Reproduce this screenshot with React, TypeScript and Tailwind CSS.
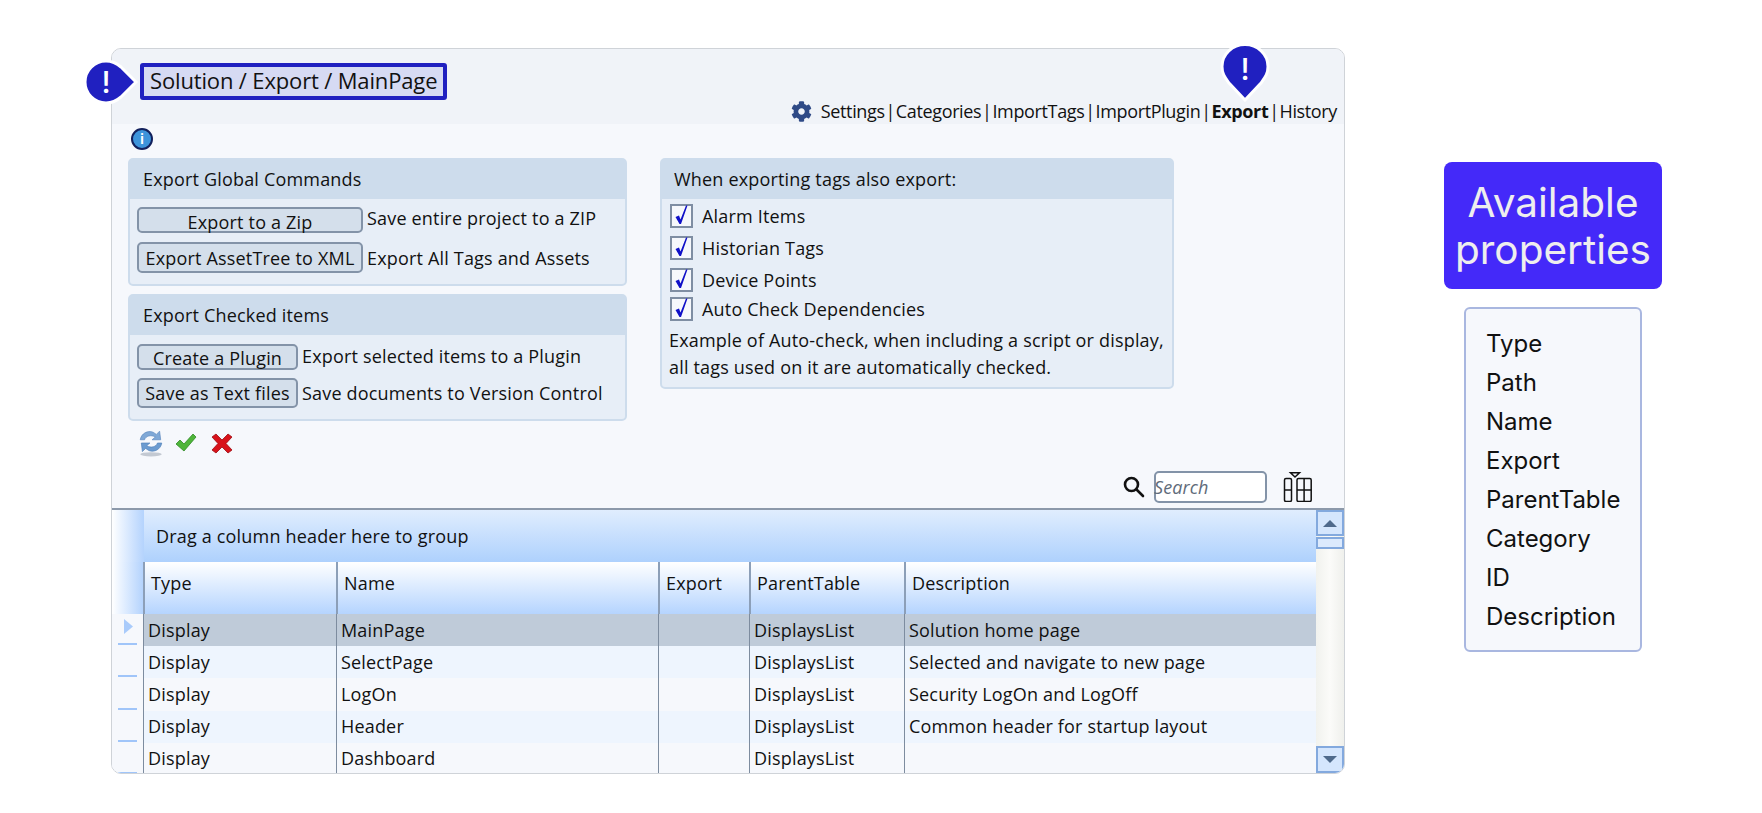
import { FaCog } from 'react-icons/fa';

const rows = [
  ['Display', 'MainPage', '', 'DisplaysList', 'Solution home page'],
  ['Display', 'SelectPage', '', 'DisplaysList', 'Selected and navigate to new page'],
  ['Display', 'LogOn', '', 'DisplaysList', 'Security LogOn and LogOff'],
  ['Display', 'Header', '', 'DisplaysList', 'Common header for startup layout'],
  ['Display', 'Dashboard', '', 'DisplaysList', ''],
];

const columns = ['Type', 'Name', 'Export', 'ParentTable', 'Description'];
const properties = ['Type', 'Path', 'Name', 'Export', 'ParentTable', 'Category', 'ID', 'Description'];
const checks = ['Alarm Items', 'Historian Tags', 'Device Points', 'Auto Check Dependencies'];

const gridCols = 'grid grid-cols-[31px_193px_322px_91px_155px_412px]';

function Checkbox() {
  return (
    <svg width="23" height="24" viewBox="0 0 23 24" className="shrink-0 overflow-visible">
      <rect x="1" y="1" width="21" height="22" fill="#f6f8fc" stroke="#7f8ea3" strokeWidth="2" />
      <path d="M5.5 13 L9 11.5 L10.5 15.5 L16 1.5 L17.5 1.5 L11 20 L9.5 20 Z" fill="#1010c8" />
    </svg>
  );
}

function Card({ title, children, className, titleInset }: { title: string; children: React.ReactNode; className: string; titleInset: string }) {
  return (
    <div className={`rounded-[5px] border-2 border-[#cddcec] bg-[#e7eef7] ${className}`}>
      <div className={`flex h-[39px] items-center bg-[#cddcec] text-[18px] tracking-[0.18px] ${titleInset}`}>{title}</div>
      {children}
    </div>
  );
}

function CmdRow({ label, desc, w, h, mt, labelPad, descPad }: { label: string; desc: string; w: string; h: string; mt: string; labelPad: string; descPad: string }) {
  return (
    <div className={`flex items-center ${mt}`}>
      <button className={`${w} ${h} ${labelPad} shrink-0 rounded-[5px] border-2 border-[#8393a8] bg-[#d4dfeb] text-center text-[18px] leading-none tracking-[0.18px] whitespace-nowrap text-[#111]`}>
        {label}
      </button>
      <span className={`ml-[4px] whitespace-nowrap text-[18px] tracking-[0.18px] ${descPad}`}>{desc}</span>
    </div>
  );
}

function Pin({ className, dir }: { className: string; dir: 'right' | 'down' }) {
  return (
    <div className={`absolute flex items-center justify-center ${className} ${dir === 'right' ? 'pr-[10px]' : 'pb-[6px]'}`}>
      <svg viewBox="0 0 60 60" className="absolute inset-0 h-full w-full">
        {dir === 'right' ? (
          <path d="M25 9 C13.4 9 4 18.4 4 30 C4 41.6 13.4 51 25 51 C31 51 36 48.5 40 45 L55 30 L40 15 C36 11.5 31 9 25 9 Z" fill="#2020c0" stroke="#fff" strokeWidth="3" />
        ) : (
          <path d="M30 2.5 C17.5 2.5 7 12 7 24.5 C7 32 10 35.5 14 41 L30 58 L46 41 C50 35.5 53 32 53 24.5 C53 12 42.5 2.5 30 2.5 Z" fill="#2020c0" stroke="#fff" strokeWidth="3" />
        )}
      </svg>
      <span className="relative font-['Inter',sans-serif] text-[30px] font-medium leading-none text-white">!</span>
    </div>
  );
}

function RefreshIcon() {
  return (
    <svg width="26" height="28" viewBox="0 0 24 26">
      <ellipse cx="12" cy="23.5" rx="10" ry="2" fill="#c3c9d2" />
      <path d="M2 10 C3 4 9 1 14 3 L17 5 L20 2 L21 10 L13 10 L16 7.5 C12 5 7 6.5 6 10 Z" fill="#7fa8d6" stroke="#5b87bd" strokeWidth="0.6" />
      <path d="M22 13 C21 19 15 22 10 20 L7 18 L4 21 L3 13 L11 13 L8 15.5 C12 18 17 16.5 18 13 Z" fill="#6b9bd0" stroke="#4f7fb8" strokeWidth="0.6" />
    </svg>
  );
}

function ColumnsIcon() {
  return (
    <svg width="29" height="30" viewBox="0 0 29 30" fill="none" stroke="#111" strokeWidth="1.5">
      <path d="M7.5 0.8 H16.5 L12 5 Z" />
      <rect x="1.5" y="6.5" width="7" height="23" rx="1.5" />
      <path d="M1.5 18 H8.5" />
      <rect x="14" y="6.5" width="14.2" height="23" rx="1.5" />
      <path d="M14 18 H28.2 M21.1 6.5 V29.5" />
    </svg>
  );
}

export default function App() {
  return (
    <div className="relative h-[813px] w-[1762px] overflow-hidden bg-white font-['Open_Sans',sans-serif] text-[#111]">
      <div className="flex pl-[111px] pt-[48px]">
        {/* Main panel */}
        <div className="flex h-[726px] w-[1234px] flex-col overflow-hidden rounded-[10px] border border-[#cfd3d8] bg-[#f6f8fc]">
          <div className="relative flex h-[75px] shrink-0 items-end bg-[#f0f3f8]">
            <div className="mb-[9px] ml-[28px] mt-[14px] self-start rounded-[3px] border-4 border-[#2020c0] bg-[#d6daf3] px-[6px] pb-[2px] text-[22px] leading-[27px] tracking-[-0.15px] whitespace-nowrap">
              Solution / Export / MainPage
            </div>
            <div className="absolute bottom-[0px] right-[7px] flex items-center whitespace-nowrap text-[18px] leading-[26px] tracking-[-0.36px] [word-spacing:-3.5px]">
              <FaCog className="mr-[9px] text-[21px] text-[#2f4a86]" />
              <span>Settings | Categories | ImportTags | ImportPlugin | <b>Export</b> | History</span>
            </div>
          </div>

          <div className="flex h-[384px] shrink-0 flex-col px-[16px]">
            <div className="ml-[3px] mt-[4px] flex h-[22px] w-[22px] items-center justify-center rounded-full border-2 border-[#12205c] bg-[#3d94db] font-['Inter',sans-serif] text-[13px] font-bold leading-none text-white">
              i
            </div>
            <div className="mt-[8px] flex">
              <div className="w-[499px]">
                <Card title="Export Global Commands" className="h-[128px]" titleInset="pl-[13px]">
                  <CmdRow label="Export to a Zip" desc="Save entire project to a ZIP" w="w-[226px]" h="h-[26px]" mt="ml-[7px] mt-[8px]" labelPad="pt-[3px]" descPad="-mt-[3px]" />
                  <CmdRow label="Export AssetTree to XML" desc="Export All Tags and Assets" w="w-[226px]" h="h-[31px]" mt="ml-[7px] mt-[9px]" labelPad="" descPad="mt-[1px]" />
                </Card>
                <Card title="Export Checked items" className="mt-[8px] h-[127px]" titleInset="pl-[13px]">
                  <CmdRow label="Create a Plugin" desc="Export selected items to a Plugin" w="w-[161px]" h="h-[26px]" mt="ml-[7px] mt-[9px]" labelPad="pt-[1px]" descPad="-mt-[2px]" />
                  <CmdRow label="Save as Text files" desc="Save documents to Version Control" w="w-[161px]" h="h-[30px]" mt="ml-[7px] mt-[8px]" labelPad="" descPad="" />
                </Card>
                <div className="mt-[8px] flex items-center pl-[10px]">
                  <RefreshIcon />
                  <svg width="22" height="20" viewBox="0 0 22 20" className="ml-[11px]">
                    <path d="M1 11 L5 7 L9 11 L18 1 L21 4 L9 18 Z" fill="#4fb53a" stroke="#2f8a24" strokeWidth="0.8" />
                  </svg>
                  <svg width="22" height="21" viewBox="0 0 22 21" className="ml-[14px]">
                    <path d="M1 4 L5 1 L11 7 L17 1 L21 4 L15 10.5 L21 17 L17 20 L11 14 L5 20 L1 17 L7 10.5 Z" fill="#d8121a" stroke="#9c0d12" strokeWidth="0.8" />
                  </svg>
                </div>
              </div>

              <div className="ml-[33px] h-[231px] w-[514px]">
                <Card title="When exporting tags also export:" className="h-full" titleInset="pl-[12px]">
                  <div className="flex flex-col pl-[8px] pt-[1px]">
                    {checks.map((c, i) => (
                      <div key={c} className={`flex items-center gap-[9px] ${i === 3 ? 'h-[26px]' : 'h-[32px]'} text-[18px] tracking-[0.18px]`}>
                        <Checkbox />
                        <span>{c}</span>
                      </div>
                    ))}
                  </div>
                  <p className="ml-[7px] mt-[5px] whitespace-nowrap text-[18px] leading-[27px] tracking-[0.18px]">
                    Example of Auto-check, when including a script or display,
                    <br />
                    all tags used on it are automatically checked.
                  </p>
                </Card>
              </div>
            </div>
          </div>

          {/* Search row */}
          <div className="flex h-0 shrink-0 items-end justify-end pr-[32px]">
            <div className="mb-[5px] flex items-center">
              <svg width="22" height="22" viewBox="0 0 22 22" fill="none" stroke="#111" strokeWidth="2.6" className="mr-[9px]">
                <circle cx="8.5" cy="8.5" r="6.5" />
                <path d="M13.5 13.5 L20 20" strokeLinecap="round" />
              </svg>
              <div className="flex h-[32px] w-[113px] items-center rounded-[5px] border-2 border-[#8393a8] bg-white pt-[1px] text-[18px] italic tracking-[0.1px] text-[#5f6b7a]">
                <span className="-ml-[2px]">Search</span>
              </div>
              <div className="ml-[16px]">
                <ColumnsIcon />
              </div>
            </div>
          </div>

          {/* Table */}
          <div className="flex min-h-0 flex-1 border-t-2 border-[#8c99aa]">
            <div className="w-[1204px] text-[18px] tracking-[0.18px]">
              <div className="flex h-[52px]">
                <div className="w-[32px] bg-gradient-to-r from-[#ffffff] to-[#b4d3fd]" />
                <div className="flex flex-1 items-center bg-gradient-to-b from-[#e0edfe] to-[#aed1fd] pl-[12px] pt-[1px]">
                  Drag a column header here to group
                </div>
              </div>
              <div className={`${gridCols} h-[52px]`}>
                <div className="bg-gradient-to-r from-[#ffffff] to-[#b4d3fd]" />
                {columns.map((c) => (
                  <div key={c} className="flex items-center border-l-2 border-[#8c9fb8] bg-gradient-to-b from-[#ffffff] to-[#b5d4fe] pb-[9px] pl-[6px]">
                    {c}
                  </div>
                ))}
              </div>
              {rows.map((row, i) => (
                <div key={row[1]} className={`${gridCols} h-[32.2px] ${i === 0 ? 'bg-[#bfcbd9]' : i % 2 === 1 ? 'bg-[#eef5fe]' : 'bg-[#f6f8fc]'}`}>
                  <div className="relative bg-[#f6f8fc]">
                    {i === 0 && (
                      <svg width="9" height="15" viewBox="0 0 9 15" className="absolute left-[12px] top-[5px]">
                        <path d="M0 0 L9 7.5 L0 15 Z" fill="#a9cbfb" />
                      </svg>
                    )}
                    <div className="absolute bottom-[1px] left-[6px] h-[2px] w-[19px] bg-[#a0c5f9]" />
                  </div>
                  {row.map((cell, j) => (
                    <div key={j} className="flex items-center whitespace-nowrap border-l border-[#7d8c9f] pl-[4px]">
                      {cell}
                    </div>
                  ))}
                </div>
              ))}
            </div>
            {/* Scrollbar */}
            <div className="flex w-[28px] flex-col bg-gradient-to-r from-[#f1f2ee] via-[#fbfbf9] to-[#eff0ec]">
              <div className="flex h-[26px] items-center justify-center border-2 border-[#83a9de] bg-[#d5e6fd]">
                <svg width="14" height="7" viewBox="0 0 14 7"><path d="M7 0 L14 7 H0 Z" fill="#4f6a8c" /></svg>
              </div>
              <div className="mt-[1px] h-[12px] border-2 border-[#83a9de] bg-[#dceafd]" />
              <div className="flex-1" />
              <div className="flex h-[27px] items-center justify-center border-2 border-[#83a9de] bg-[#d5e6fd]">
                <svg width="14" height="7" viewBox="0 0 14 7"><path d="M0 0 H14 L7 7 Z" fill="#4f6a8c" /></svg>
              </div>
            </div>
          </div>
        </div>

        {/* Right column */}
        <div className="ml-[99px] mt-[114px] flex w-[218px] flex-col items-center">
          <div className="flex h-[127px] w-[218px] items-center justify-center rounded-[8px] bg-[#4429f9] text-center font-['Inter',sans-serif] text-[40.5px] leading-[47px] text-[#eeeeee]">
            Available
            <br />
            properties
          </div>
          <div className="mt-[18px] h-[345px] w-[178px] rounded-[6px] border-2 border-[#a9b7e0] bg-[#f6f8fc] pl-[20px] pt-[15px] font-['Inter',sans-serif] text-[24px] leading-[39px] text-[#111]">
            {properties.map((p) => (
              <div key={p}>{p}</div>
            ))}
          </div>
        </div>
      </div>

      <Pin className="left-[81px] top-[52px] h-[60px] w-[60px]" dir="right" />
      <Pin className="left-[1215px] top-[42px] h-[60px] w-[60px]" dir="down" />
    </div>
  );
}
